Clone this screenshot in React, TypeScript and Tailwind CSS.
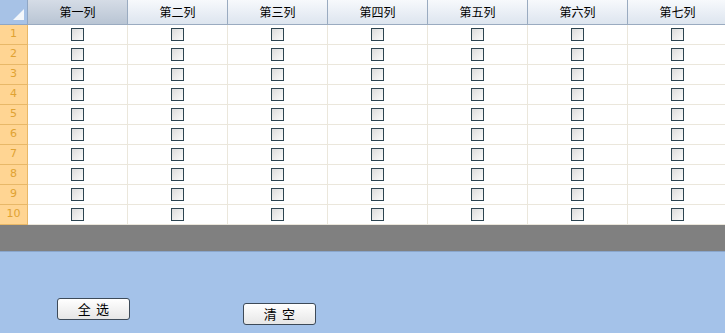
import { Fragment } from "react";

const cols = ["第一列", "第二列", "第三列", "第四列", "第五列", "第六列", "第七列"];
const rows = [1, 2, 3, 4, 5, 6, 7, 8, 9, 10];

function Box() {
    return (
        <span className="block w-[13px] h-[13px] border border-[#2c4450] bg-gradient-to-br from-[#dcdcdc] to-[#fbfbfb]" />
    );
}

export default function App() {
    return (
        <div className="w-[725px] h-[333px] overflow-hidden bg-[#a4c2e9] flex flex-col font-['Noto_Sans_CJK_SC',sans-serif]">
            <div className="grid grid-cols-[28px_repeat(7,100px)] w-[728px] bg-white">
                <div className="h-[25px] bg-[#a7c2e6] border-r border-b border-[#8fa6c4] flex items-end justify-end pr-[3px] pb-[4px]">
                    <svg width="11" height="11" viewBox="0 0 11 11">
                        <polygon points="11,0 11,11 0,11" fill="#f4f7fb" />
                    </svg>
                </div>
                {cols.map((c, i) => (
                    <div
                        key={c}
                        className={`h-[25px] border-r border-b border-[#9aabc0] flex items-center justify-center text-[12px] text-black ${
                            i === 0
                                ? "bg-gradient-to-b from-[#d5dce6] to-[#b9c5d4]"
                                : "bg-gradient-to-b from-[#f7f9fc] to-[#dde5ef]"
                        }`}
                    >
                        {c}
                    </div>
                ))}
                {rows.map((r) => (
                    <Fragment key={r}>
                        <div className="h-[20px] bg-[#ffd593] border-r border-b border-[#e8b868] flex items-center justify-center text-[11px] text-[#e0a232] font-['DejaVu_Sans',sans-serif]">
                            {r}
                        </div>
                        {cols.map((c) => (
                            <div
                                key={c}
                                className="h-[20px] border-r border-b border-[#ebe7dc] flex items-center justify-center"
                            >
                                <Box />
                            </div>
                        ))}
                    </Fragment>
                ))}
            </div>
            <div className="h-[27px] bg-[#808080] border-b border-[#8aa6cc]" />
            <div className="relative flex-1">
                <button className="absolute left-[57px] top-[46px] w-[73px] h-[22px] rounded-[3px] border border-[#3d4a58] bg-gradient-to-b from-white to-[#e6e6e6] text-[13px] text-black tracking-[0.4em] pl-[5px]">
                    全选
                </button>
                <button className="absolute left-[243px] top-[51px] w-[73px] h-[22px] rounded-[3px] border border-[#3d4a58] bg-gradient-to-b from-white to-[#e6e6e6] text-[13px] text-black tracking-[0.4em] pl-[5px]">
                    清空
                </button>
            </div>
        </div>
    );
}
